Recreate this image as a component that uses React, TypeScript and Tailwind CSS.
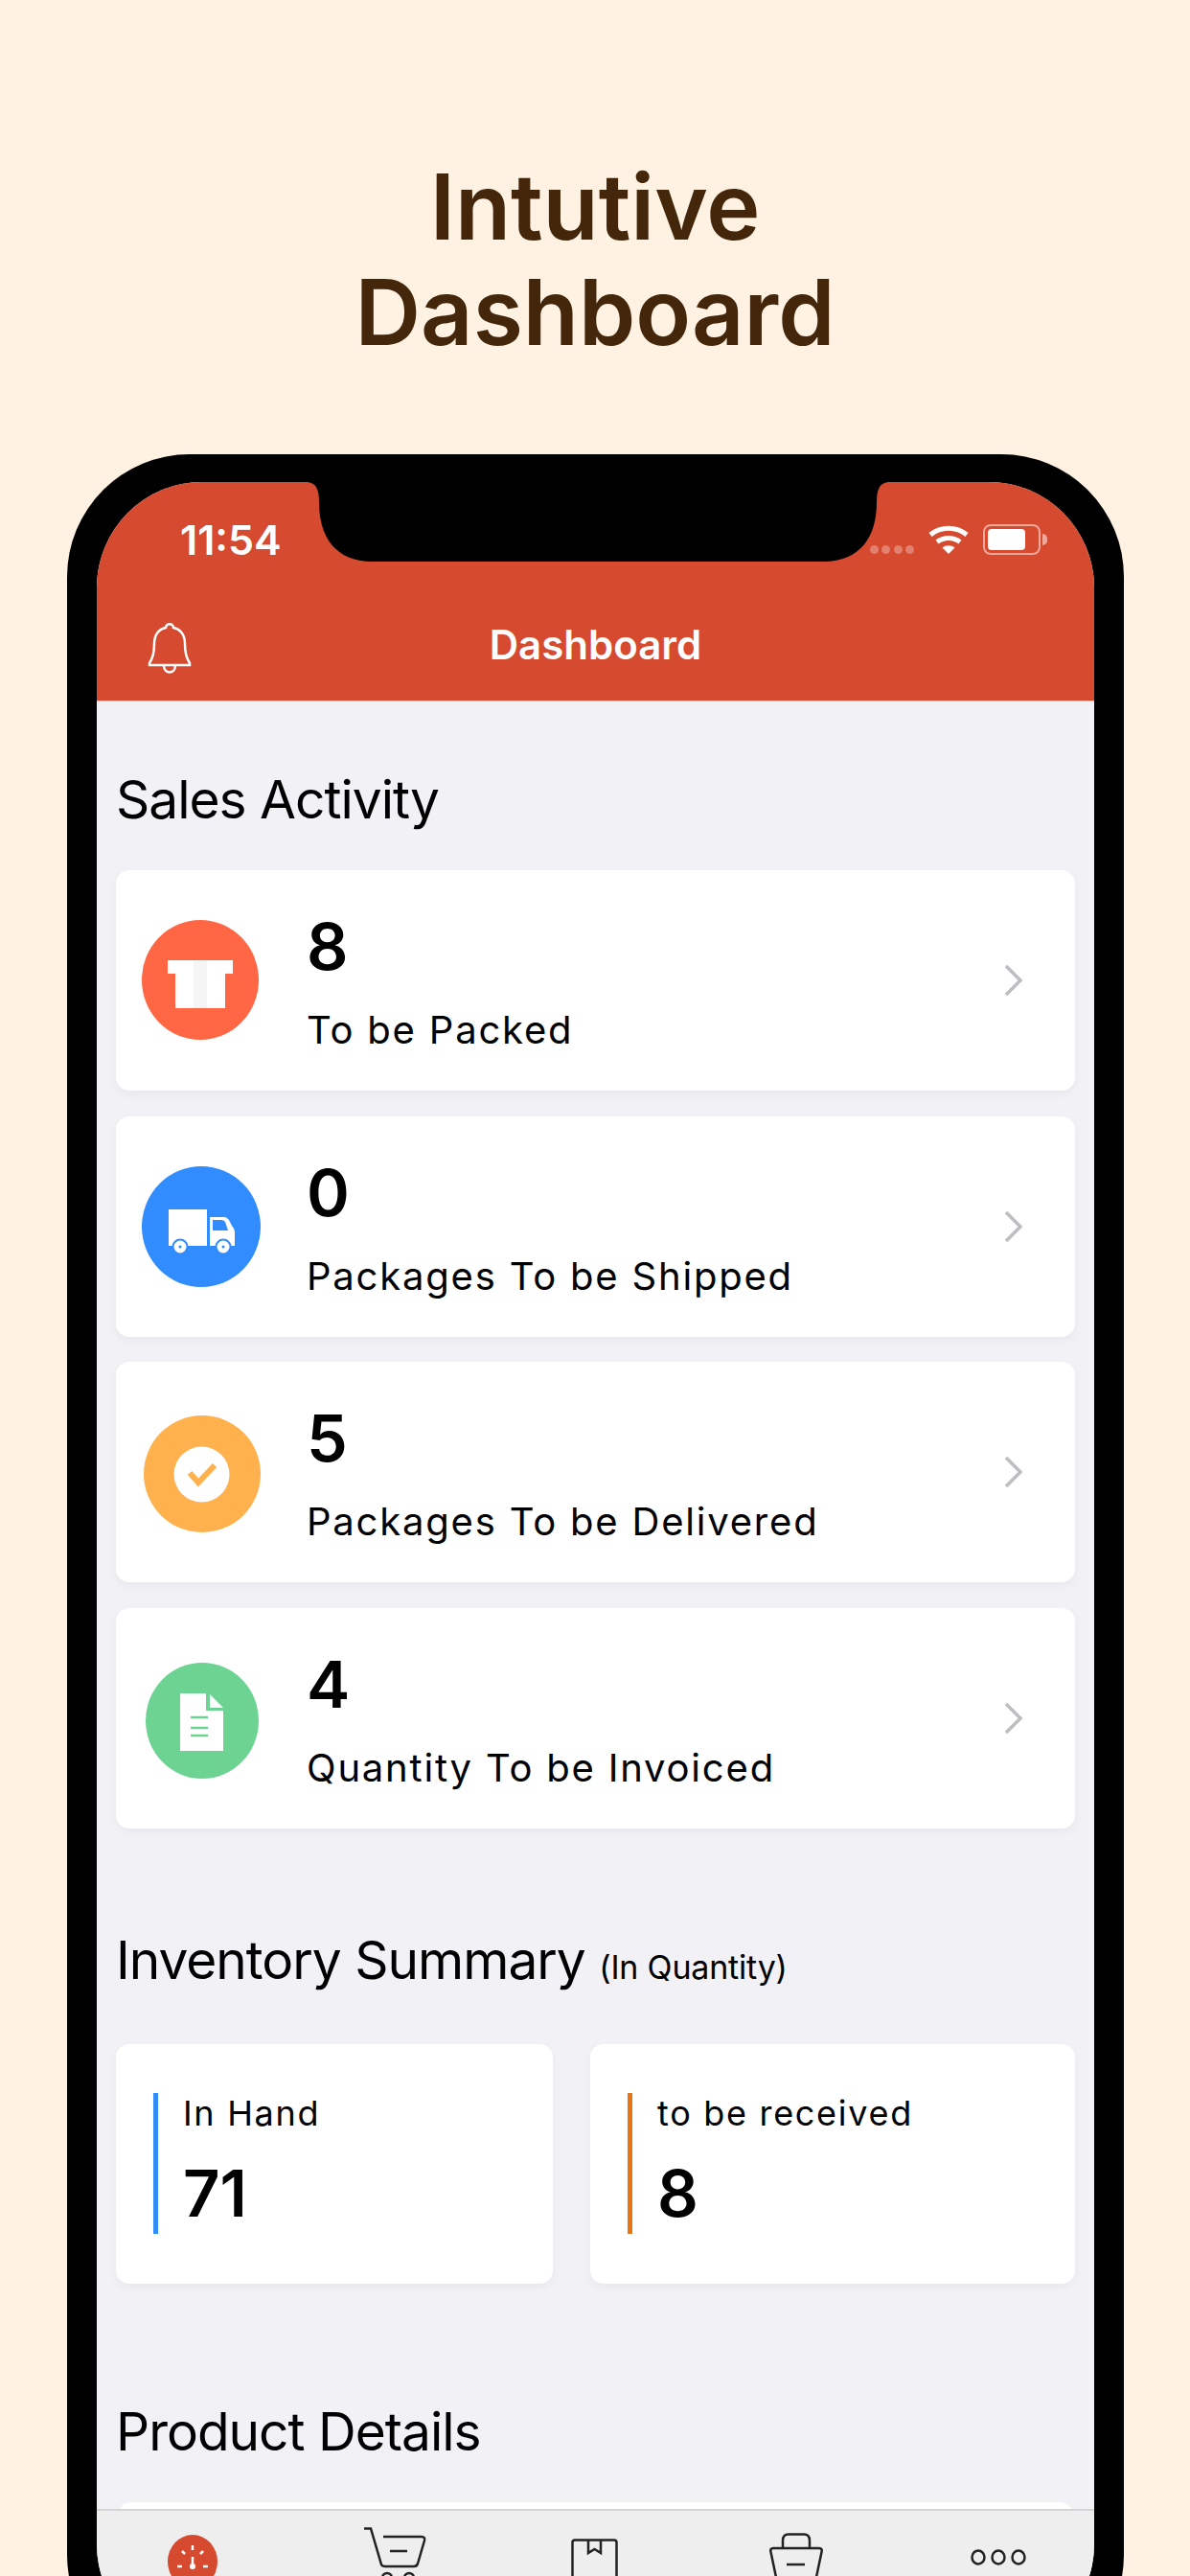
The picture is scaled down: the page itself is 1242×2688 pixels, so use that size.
const rows = [
  { n: "8", label: "To be Packed", icon: "box" },
  { n: "0", label: "Packages To be Shipped", icon: "truck" },
  { n: "5", label: "Packages To be Delivered", icon: "check" },
  { n: "4", label: "Quantity To be Invoiced", icon: "doc" },
];

function RowIcon({ kind }: { kind: string }) {
  if (kind === "box")
    return (
      <svg width="124" height="126" viewBox="0 0 124 126">
        <ellipse cx="61" cy="62.5" rx="61" ry="62.5" fill="#ff6644" />
        <path d="M27 42h68v14h-8v36H35V56h-8z" fill="#fff" />
        <rect x="54" y="42" width="14" height="50" fill="#f5f5f5" />
      </svg>
    );
  if (kind === "truck")
    return (
      <svg width="124" height="126" viewBox="0 0 124 126">
        <ellipse cx="62" cy="63" rx="62" ry="63" fill="#318cff" />
        <path d="M28 45h40v38H28z" fill="#fff" />
        <path d="M71 53h14c3 0 4 1 6 3l3 6c2 2 3 5 3 7v14H71z" fill="#fff" />
        <path d="M74 56h9c2 0 3 1 4 2l3 9H74z" fill="#318cff" />
        <circle cx="40" cy="84" r="7.5" fill="#fff" stroke="#318cff" strokeWidth="2" />
        <circle cx="85" cy="84" r="7.5" fill="#fff" stroke="#318cff" strokeWidth="2" />
        <circle cx="40" cy="84" r="1.5" fill="#318cff" />
        <circle cx="85" cy="84" r="1.5" fill="#318cff" />
      </svg>
    );
  if (kind === "check")
    return (
      <svg width="124" height="126" viewBox="0 0 124 126">
        <circle cx="63" cy="65" r="61" fill="#ffb14e" />
        <circle cx="62.5" cy="65.5" r="29" fill="#fff" />
        <path d="M50 64l9 10 17-18" fill="none" stroke="#ffb14e" strokeWidth="6" />
      </svg>
    );
  return (
    <svg width="124" height="126" viewBox="0 0 124 126">
      <ellipse cx="63" cy="65.5" rx="59" ry="60.5" fill="#6dd392" />
      <path d="M40 37h27v18h18v42H40z" fill="#fff" />
      <path d="M71 38l14 14H71z" fill="#fff" />
      <path d="M51 62h18M51 73h18M51 81h18" stroke="#6dd392" strokeWidth="2.5" />
    </svg>
  );
}

function Title({ children }: { children: React.ReactNode }) {
  return <h2 className="text-[55px] leading-[68px] text-black tracking-[-1px] font-normal">{children}</h2>;
}

export default function App() {
  return (
    <div className="h-[2688px] overflow-hidden bg-[#fff2e3] [font-family:Inter,'Liberation_Sans',sans-serif]">
      <div className="pt-[161px] h-[474px] text-center text-[#44260a] text-[95px] leading-[110px] font-semibold">
        <div>Intutive</div>
        <div>Dashboard</div>
      </div>
      <div className="ml-[70px] mr-[69px] h-[2320px] bg-black rounded-[128px] pt-[29px] px-[31px] relative">
        <svg className="absolute left-[249px] top-0 z-10" width="610" height="112" viewBox="0 0 610 112">
          <path d="M0 0V29C10 29 14 35 14 50C14 85 30 112 70 112H540C580 112 596 85 596 50C596 35 600 29 610 29V0Z" fill="#000" />
        </svg>
        <div className="h-[2262px] rounded-[110px] overflow-hidden bg-[#f1f1f6] flex flex-col">
          <header className="h-[229px] bg-[#d64a2f] shrink-0 text-white border-b border-[#cfcfd2]">
            <div className="flex items-center justify-between pt-[32px] pl-[87px] pr-[49px] h-[88px]">
              <span className="text-[43px] leading-[56px] font-semibold">11:54</span>
              <div className="flex items-center">
                <div className="flex gap-[3.5px] opacity-30 relative z-20 mt-[20px]">
                  <i className="w-[9px] h-[9px] rounded-full bg-white" />
                  <i className="w-[9px] h-[9px] rounded-full bg-white" />
                  <i className="w-[9px] h-[9px] rounded-full bg-white" />
                  <i className="w-[9px] h-[9px] rounded-full bg-white" />
                </div>
                <svg className="ml-[15px]" width="42" height="31" viewBox="0 0 42 31" fill="none" stroke="#fff">
                  <path d="M2 10C13 1 29 1 40 10" strokeWidth="5" />
                  <path d="M9 17.5C16 12 26 12 33 17.5" strokeWidth="5" />
                  <path d="M21 30 14.500 23.500C18 20.500 24 20.500 27.500 23.500Z" fill="#fff" stroke="none" />
                </svg>
                <div className="flex items-center gap-[2px] ml-[15px]">
                  <div className="w-[60px] h-[32px] rounded-[8px] border-2 border-[#f0a898] p-[3px] flex">
                    <div className="w-[39px] bg-white rounded-[4px]" />
                  </div>
                  <div className="w-[5px] h-[12px] bg-[#f0a898] rounded-r-full" />
                </div>
              </div>
            </div>
            <div className="flex items-center justify-center relative h-[96px] mt-[34px]">
              <svg className="absolute left-[52px] top-[22px]" width="48" height="58" viewBox="0 0 48 58" fill="none" stroke="#fff" strokeWidth="2.5">
                <path d="M3 45c4-6 5-12 5-20 0-11 6-16 12-17 0-5 8-5 8 0 6 1 12 6 12 17 0 8 1 14 5 20v2H3z" />
                <path d="M18 47c0 10 12 10 12 0" />
              </svg>
              <span className="text-[42px] leading-[52px] font-semibold">Dashboard</span>
            </div>
          </header>

          <main className="flex-1 px-[20px] pt-[68px] min-h-0 overflow-hidden">
            <Title>Sales Activity</Title>
            <div className="mt-[40px] flex flex-col gap-[26.5px]">
              {rows.map((r) => (
                <div key={r.n} className="h-[230px] bg-white rounded-[14px] shadow-[0_4px_10px_rgba(0,0,0,0.04)] flex items-center pl-[27px] pr-[52px]">
                  <RowIcon kind={r.icon} />
                  <div className="ml-[48px] flex-1">
                    <div className="text-[68px] leading-[80px] font-semibold text-black">{r.n}</div>
                    <div className="mt-[24px] text-[40px] leading-[48px] tracking-[1.8px] text-black">{r.label}</div>
                  </div>
                  <svg width="24" height="36" viewBox="0 0 24 36" fill="none" stroke="#bdbdc2" strokeWidth="3.5">
                    <path d="M4 3l15 15L4 33" />
                  </svg>
                </div>
              ))}
            </div>

            <div className="mt-[103px]">
              <Title>
                Inventory Summary <span className="text-[34px] tracking-[-0.2px]">(In Quantity)</span>
              </Title>
            </div>
            <div className="mt-[46px] flex gap-[39px]">
              {[
                { l: "In Hand", n: "71", c: "bg-[#318cff]", w: "w-[456px]" },
                { l: "to be received", n: "8", c: "bg-[#e87511]", w: "flex-1" },
              ].map((c) => (
                <div key={c.l} className={`${c.w} h-[250px] bg-white rounded-[14px] shadow-[0_4px_10px_rgba(0,0,0,0.04)] flex items-center pl-[39px]`}>
                  <div className={`w-[5px] h-[147px] ${c.c}`} />
                  <div className="pl-[26px] pb-[3px]">
                    <div className="text-[36px] leading-[44px] tracking-[1.7px] text-black">{c.l}</div>
                    <div className="mt-[22px] text-[67px] leading-[80px] font-semibold text-black">{c.n}</div>
                  </div>
                </div>
              ))}
            </div>

            <div className="mt-[120px]">
              <Title>Product Details</Title>
            </div>
            <div className="mt-[40px] mx-[2px] h-[200px] bg-white rounded-[14px]" />
          </main>

          <nav className="h-[147px] shrink-0 bg-[#eeeeee] border-t-2 border-[#d5d5d8] flex items-start pl-[74px]">
            <svg className="mt-[25px] shrink-0" width="52" height="56" viewBox="0 0 52 56">
              <ellipse cx="26" cy="28" rx="26" ry="28" fill="#d64a2f" />
              <path d="M26 11v5M26 23v10M10 33h5M37 33h5M15 17l3 3M37 17l-3 3" stroke="#fff" strokeWidth="2.5" />
              <circle cx="26" cy="33" r="3" fill="#fff" />
            </svg>
            <svg className="ml-[153px] mt-[17px] shrink-0" width="66" height="70" viewBox="0 0 66 70" fill="none" stroke="#222" strokeWidth="2.5">
              <path d="M0 1.500H7L18 39Q19 41 22 41H52Q55 41 56 38L63 14Q64 10 60 10H20M27 25H45" />
              <circle cx="24" cy="53" r="5" />
              <circle cx="47" cy="53" r="5" />
            </svg>
            <svg className="ml-[150px] mt-[29px] shrink-0" width="49" height="80" viewBox="0 0 49 80" fill="none" stroke="#222" strokeWidth="2.5">
              <path d="M1.500 80V4Q1.500 1.500 4 1.500H45Q47.500 1.500 47.500 4V80M18 2V15L24.500 11L31 15V2" />
            </svg>
            <svg className="ml-[158px] mt-[23px] shrink-0" width="56" height="72" viewBox="0 0 56 72" fill="none" stroke="#222" strokeWidth="2.5">
              <path d="M4 16H52Q55.500 16 54.500 20L44 70H12L1.500 20Q0.500 16 4 16ZM14 15V8Q14 1.500 20 1.500H36Q42 1.500 42 8V15M18 33H37" />
            </svg>
            <svg className="ml-[154px] mt-[40px] shrink-0" width="58" height="17" viewBox="0 0 58 17" fill="none" stroke="#222" strokeWidth="2.5">
              <ellipse cx="8" cy="8.500" rx="6.500" ry="7" />
              <ellipse cx="29" cy="8.500" rx="6.500" ry="7" />
              <ellipse cx="50" cy="8.500" rx="6.500" ry="7" />
            </svg>
          </nav>
        </div>
      </div>
    </div>
  );
}
